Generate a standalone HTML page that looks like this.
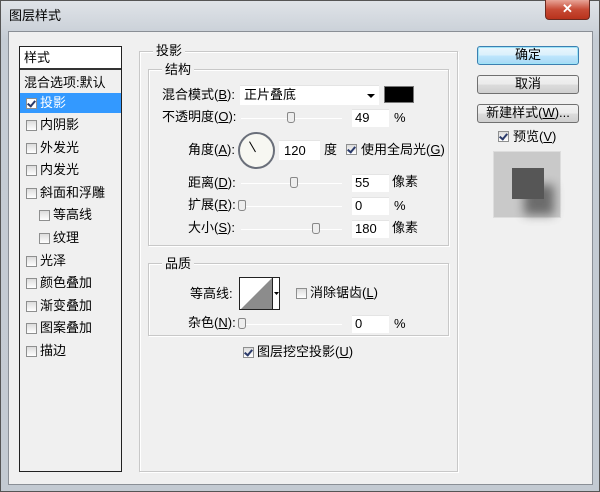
<!DOCTYPE html><html><head><meta charset="utf-8"><style>
*{margin:0;padding:0;box-sizing:border-box}
body{width:600px;height:492px;overflow:hidden;background:#b9bfc6;font-family:"Liberation Sans","Noto Sans CJK SC",sans-serif;font-size:13px;color:#000;position:relative}
.a{position:absolute}
.frame{left:0;top:0;width:600px;height:492px;background:linear-gradient(#dfe3e8,#c5ccd4 40px,#c3cad2);border:1px solid #555}
.client{left:8px;top:31px;width:585px;height:454px;background:#f0f0f0;border:1px solid #8a8f96}
.t{white-space:nowrap;line-height:14px}
.cb{width:11px;height:11px;border:1px solid #8e8f8f;background:linear-gradient(#dcdcdc,#fff)}
.cbk::after{content:"";position:absolute;left:2px;top:0px;width:3px;height:6px;border:solid #2a3a6a;border-width:0 2px 2px 0;transform:rotate(40deg)}
.grp{border:1px solid #c8c8c8;box-shadow:inset 1px 1px 0 #fff,1px 1px 0 #fff}
.lg{background:#f0f0f0;padding:0 3px}
.inp{background:#fff;border-top:1px solid #e4e4e4}
.sl{height:1px;background:#b5b5b5;border-bottom:1px solid #fff}
.th{width:8px;height:11px;border:1px solid #888;border-radius:2px 2px 3px 3px;background:#eee}
.btn{border:1px solid #707070;border-radius:3px;background:linear-gradient(#f2f2f2,#ebebeb 50%,#dcdcdc 51%,#cfcfcf);text-align:center;line-height:16px}
</style></head><body>
<div class="a frame"></div>
<div class="a t" style="left:9px;top:9px;font-size:13px">图层样式</div>
<div class="a" style="left:545px;top:0;width:45px;height:20px;background:linear-gradient(#e8a598,#c74a35 50%,#b8321c);border:1px solid #6b2a20;border-top:0;border-radius:0 0 4px 4px;color:#fff;text-align:center;font-weight:bold;line-height:18px">✕</div>
<div class="a client"></div>
<div class="a" style="left:19px;top:46px;width:103px;height:426px;border:1px solid #222;background:#f0f0f0"></div>
<div class="a" style="left:20px;top:47px;width:101px;height:23px;background:#fff;border-bottom:2px solid #333"></div>
<div class="a t" style="left:24px;top:51px">样式</div>
<div class="a t" style="left:24px;top:76px">混合选项:默认</div>
<div class="a" style="left:20px;top:93px;width:101px;height:20px;background:#3399ff"></div>
<div class="a cb cbk" style="left:26px;top:98px;background:#fff"></div><div class="a t" style="left:40px;top:96px;color:#fff">投影</div>
<div class="a cb" style="left:26px;top:120px"></div><div class="a t" style="left:40px;top:118px">内阴影</div>
<div class="a cb" style="left:26px;top:143px"></div><div class="a t" style="left:40px;top:141px">外发光</div>
<div class="a cb" style="left:26px;top:165px"></div><div class="a t" style="left:40px;top:163px">内发光</div>
<div class="a cb" style="left:26px;top:188px"></div><div class="a t" style="left:40px;top:186px">斜面和浮雕</div>
<div class="a cb" style="left:39px;top:210px"></div><div class="a t" style="left:53px;top:208px">等高线</div>
<div class="a cb" style="left:39px;top:233px"></div><div class="a t" style="left:53px;top:231px">纹理</div>
<div class="a cb" style="left:26px;top:256px"></div><div class="a t" style="left:40px;top:254px">光泽</div>
<div class="a cb" style="left:26px;top:278px"></div><div class="a t" style="left:40px;top:276px">颜色叠加</div>
<div class="a cb" style="left:26px;top:301px"></div><div class="a t" style="left:40px;top:299px">渐变叠加</div>
<div class="a cb" style="left:26px;top:323px"></div><div class="a t" style="left:40px;top:321px">图案叠加</div>
<div class="a cb" style="left:26px;top:346px"></div><div class="a t" style="left:40px;top:344px">描边</div>
<div class="a grp" style="left:139px;top:51px;width:319px;height:421px"></div>
<div class="a t lg" style="left:153px;top:44px">投影</div>
<div class="a grp" style="left:148px;top:69px;width:301px;height:177px"></div>
<div class="a t lg" style="left:162px;top:63px">结构</div>
<div class="a t" style="left:162px;top:88px">混合模式(<u>B</u>):</div>
<div class="a inp" style="left:240px;top:85px;width:139px;height:20px"></div>
<div class="a t" style="left:244px;top:88px">正片叠底</div>
<div class="a" style="left:367px;top:94px;border:4px solid transparent;border-top:4px solid #000"></div>
<div class="a" style="left:384px;top:86px;width:30px;height:17px;background:#000;border:1px solid #777"></div>
<div class="a t" style="left:162px;top:110px">不透明度(<u>O</u>):</div>
<div class="a sl" style="left:241px;top:118px;width:101px"></div><div class="a th" style="left:287px;top:112px"></div>
<div class="a inp" style="left:352px;top:109px;width:37px;height:18px"></div><div class="a t" style="left:355px;top:111px">49</div><div class="a t" style="left:394px;top:111px">%</div>
<div class="a t" style="left:188px;top:143px">角度(<u>A</u>):</div>
<div class="a" style="left:238px;top:132px;width:37px;height:37px;border-radius:50%;border:2px solid #6a6f7a;background:#f7f7f2"></div>
<div class="a" style="left:255px;top:140px;width:1px;height:12px;background:#000;transform-origin:bottom;transform:rotate(-30deg)"></div>
<div class="a inp" style="left:279px;top:140px;width:41px;height:20px"></div><div class="a t" style="left:284px;top:144px">120</div><div class="a t" style="left:324px;top:143px">度</div>
<div class="a cb cbk" style="left:346px;top:144px"></div><div class="a t" style="left:361px;top:143px">使用全局光(<u>G</u>)</div>
<div class="a t" style="left:188px;top:176px">距离(<u>D</u>):</div>
<div class="a sl" style="left:241px;top:183px;width:101px"></div><div class="a th" style="left:290px;top:177px"></div>
<div class="a inp" style="left:352px;top:174px;width:37px;height:18px"></div><div class="a t" style="left:355px;top:176px">55</div><div class="a t" style="left:392px;top:175px">像素</div>
<div class="a t" style="left:188px;top:198px">扩展(<u>R</u>):</div>
<div class="a sl" style="left:241px;top:206px;width:101px"></div><div class="a th" style="left:238px;top:200px"></div>
<div class="a inp" style="left:352px;top:197px;width:37px;height:18px"></div><div class="a t" style="left:355px;top:199px">0</div><div class="a t" style="left:394px;top:199px">%</div>
<div class="a t" style="left:188px;top:221px">大小(<u>S</u>):</div>
<div class="a sl" style="left:241px;top:229px;width:101px"></div><div class="a th" style="left:312px;top:223px"></div>
<div class="a inp" style="left:352px;top:220px;width:37px;height:18px"></div><div class="a t" style="left:355px;top:222px">180</div><div class="a t" style="left:392px;top:221px">像素</div>
<div class="a grp" style="left:148px;top:263px;width:301px;height:73px"></div>
<div class="a t lg" style="left:162px;top:257px">品质</div>
<div class="a t" style="left:190px;top:287px">等高线:</div>
<div class="a" style="left:239px;top:277px;width:41px;height:33px;border:1px solid #222;background:#fff;overflow:hidden">
<svg width="41" height="33" style="position:absolute;left:0;top:0"><polygon points="0,32 32,0 32,32" fill="#8c8c8c"/><rect x="32" y="0" width="1" height="33" fill="#222"/><polygon points="34,14 39,14 36.5,17" fill="#000"/></svg></div>
<div class="a cb" style="left:296px;top:288px"></div><div class="a t" style="left:310px;top:286px">消除锯齿(<u>L</u>)</div>
<div class="a t" style="left:188px;top:316px">杂色(<u>N</u>):</div>
<div class="a sl" style="left:241px;top:324px;width:101px"></div><div class="a th" style="left:238px;top:318px"></div>
<div class="a inp" style="left:352px;top:315px;width:37px;height:18px"></div><div class="a t" style="left:355px;top:317px">0</div><div class="a t" style="left:394px;top:317px">%</div>
<div class="a cb cbk" style="left:243px;top:347px"></div><div class="a t" style="left:257px;top:345px">图层挖空投影(<u>U</u>)</div>
<div class="a btn" style="left:477px;top:46px;width:102px;height:19px;border-color:#3c7fb1;background:linear-gradient(#eaf6fd,#d9f0fc 50%,#bee6fd 51%,#a7d9f5);box-shadow:inset 0 0 0 1px #9fe4f7">确定</div>
<div class="a btn" style="left:477px;top:75px;width:102px;height:19px">取消</div>
<div class="a btn" style="left:477px;top:104px;width:102px;height:19px">新建样式(<u>W</u>)...</div>
<div class="a cb cbk" style="left:498px;top:131px"></div><div class="a t" style="left:513px;top:130px">预览(<u>V</u>)</div>
<div class="a" style="left:493px;top:151px;width:68px;height:67px;background:#c9c9c9;border:1px solid #ddd"></div>
<div class="a" style="left:524px;top:185px;width:30px;height:30px;background:#555;filter:blur(5px);opacity:.8"></div>
<div class="a" style="left:512px;top:168px;width:32px;height:31px;background:#565656"></div>
</body></html>
